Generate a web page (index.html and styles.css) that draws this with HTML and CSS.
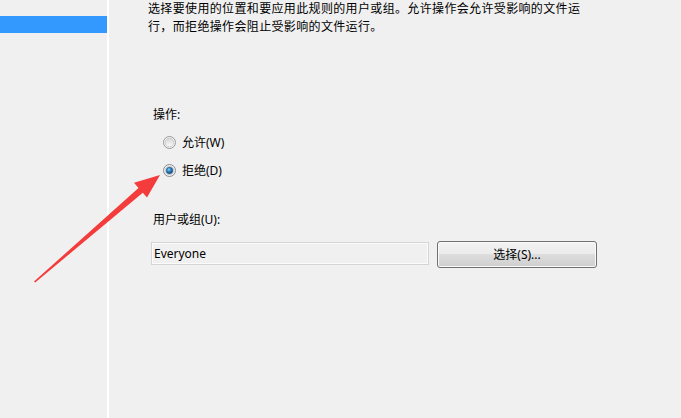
FILE: index.html
```html
<!DOCTYPE html>
<html lang="zh-CN">
<head>
    <meta charset="UTF-8">
    <title>规则权限</title>
    <link rel="stylesheet" href="styles.css">
</head>
<body>
    <div class="window">
        <div class="sidebar">
            <div class="side-item active"></div>
        </div>
        <div class="divider"></div>
        <div class="main">
            <p class="intro">选择要使用的位置和要应用此规则的用户或组。允许操作会允许受影响的文件运<br>行，而拒绝操作会阻止受影响的文件运行。</p>

            <div class="form">
                <div class="label">操作:</div>
                <div class="radio-group">
                    <div class="radio-row">
                        <svg class="radio" width="13" height="13" viewBox="0 0 13 13">
                            <defs>
                                <linearGradient id="rfill" x1="0" y1="0" x2="0" y2="1">
                                    <stop offset="0" stop-color="#d6d6d6"/>
                                    <stop offset="1" stop-color="#fbfbfb"/>
                                </linearGradient>
                            </defs>
                            <circle cx="6.5" cy="6.5" r="6" fill="#f4f4f4" stroke="#9a9a9a"/>
                            <circle cx="6.5" cy="6.5" r="4.3" fill="url(#rfill)" stroke="#c4c4c4" stroke-width="0.8"/>
                        </svg>
                        <span>允许(W)</span>
                    </div>
                    <div class="radio-row">
                        <svg class="radio" width="13" height="13" viewBox="0 0 13 13">
                            <defs>
                                <radialGradient id="dot" cx="0.4" cy="0.35" r="0.7">
                                    <stop offset="0" stop-color="#8fd3ff"/>
                                    <stop offset="0.45" stop-color="#2a84c9"/>
                                    <stop offset="1" stop-color="#0c3f6e"/>
                                </radialGradient>
                            </defs>
                            <circle cx="6.5" cy="6.5" r="6" fill="#f4f4f4" stroke="#8a8a8a"/>
                            <circle cx="6.5" cy="6.5" r="4.3" fill="#e2e2e2" stroke="#c0c0c0" stroke-width="0.8"/>
                            <circle cx="6.5" cy="6.5" r="3.2" fill="url(#dot)" stroke="#1d4f7c" stroke-width="0.6"/>
                        </svg>
                        <span>拒绝(D)</span>
                    </div>
                </div>

                <div class="label user-label">用户或组(U):</div>
                <div class="field-row">
                    <div class="textbox">Everyone</div>
                    <div class="button">选择(S)...</div>
                </div>
            </div>
        </div>

        <svg class="arrow" width="681" height="418" viewBox="0 0 681 418">
            <polygon points="34,281.5 138.5,188 134,182.7 160,175 147,197.5 142.8,192.8 35.2,282.5" fill="#f43c3c"/>
        </svg>
    </div>
</body>
</html>
```

FILE: styles.css
```css
* {
    margin: 0;
    padding: 0;
    box-sizing: border-box;
}

body {
    font-family: "Noto Sans", "Noto Sans CJK SC", sans-serif;
    font-size: 12px;
    color: #000;
    background-color: #f0f0f0;
}

.window {
    position: relative;
    display: flex;
    width: 681px;
    height: 418px;
    overflow: hidden;
}

.sidebar {
    width: 107px;
    flex: 0 0 107px;
}

.side-item {
    height: 17px;
}

.side-item.active {
    margin-top: 16px;
    background-color: #3399ff;
}

.divider {
    width: 2px;
    flex: 0 0 2px;
    background-color: #ffffff;
}

.main {
    flex: 1;
    padding-left: 39px;
}

.intro {
    line-height: 18px;
    white-space: nowrap;
    letter-spacing: 0.35px;
}

.form {
    margin-top: 70px;
    margin-left: 3px;
}

.label {
    line-height: 18px;
    padding-left: 2px;
}

.radio-group {
    margin-top: 4px;
    margin-left: 12px;
}

.radio-row {
    display: flex;
    align-items: center;
    gap: 6px;
    height: 28px;
}

.radio {
    display: block;
}

.user-label {
    margin-top: 27px;
}

.field-row {
    display: flex;
    align-items: flex-start;
    gap: 8px;
    margin-top: 12px;
}

.textbox {
    width: 278px;
    height: 23px;
    margin-top: 1px;
    padding-left: 2px;
    line-height: 21px;
    border: 1px solid #d5d5d5;
    box-shadow: inset 0 0 0 1px #fbfbfb;
    background-color: #f0f0f0;
}

.button {
    width: 160px;
    height: 27px;
    line-height: 25px;
    text-align: center;
    border: 1px solid #707070;
    border-radius: 3px;
    box-shadow: inset 0 0 0 1px #fafafa;
    background: linear-gradient(#f2f2f2 0%, #ebebeb 50%, #dddddd 50%, #cfcfcf 100%);
}

.arrow {
    position: absolute;
    left: 0;
    top: 0;
    pointer-events: none;
}
```
